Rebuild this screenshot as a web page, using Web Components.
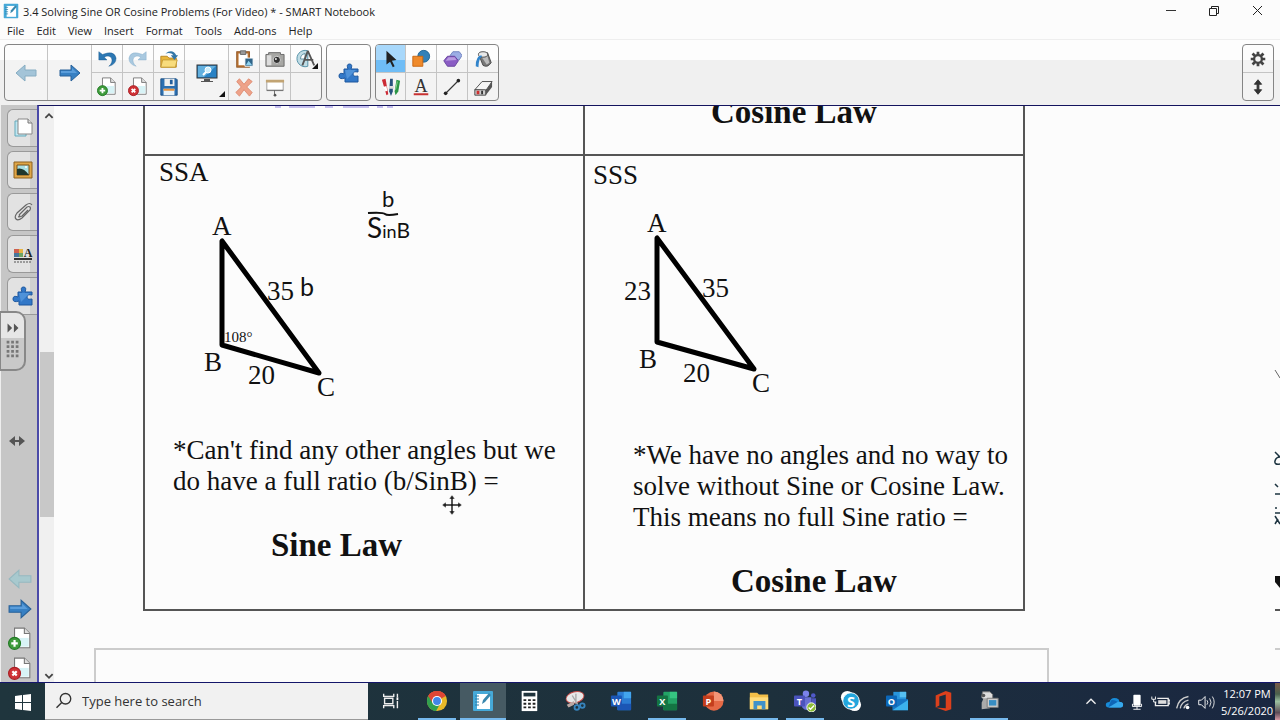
<!DOCTYPE html>
<html lang="en">
<head>
<meta charset="utf-8">
<title>3.4 Solving Sine OR Cosine Problems (For Video) * - SMART Notebook</title>
<style>
html,body{margin:0;height:100%;overflow:hidden;background:#fcfcfc}
</style>
</head>
<body>
<nb-app></nb-app>
<script>
const PAGE='<path d="M6 1h9l5 5v13H6z" fill="#fff" stroke="#777"/><path d="M10 10h9v8h-9z" fill="#d8f3f6"/><path d="M15 1v5h5" fill="#ddd" stroke="#777"/>';
const ARROW='M1 8h11V3l9 8-9 8v-5H1z';
const PUZZLE='<path d="M6 7h4q-2-5 1.500-5T13 7h7v3q-5-1-5 2t5 2v6H7v-4q-6 2-6-2t5-2z" fill="#3278c8" stroke="#1d579e"/><path d="M7 8h11l-9 9z" fill="#5b9ce0" opacity=".7"/>';
const OFF=(c1,c2,c3,letter)=>`<rect x="8" y="2" width="15" height="20" rx="1" fill="${c1}"/><path d="M15 2h8v7h-8z" fill="${c2}"/><path d="M8 15h15v7H8z" fill="${c3}"/><rect x="1" y="6" width="12" height="12" rx="1" fill="${c3}"/><text x="7" y="16" text-anchor="middle" font-size="10" font-weight="bold" fill="#fff" font-family="Open Sans, sans-serif">${letter}</text>`;
const NOTEBOOK='<rect x="1" y="1" width="20" height="20" rx="1" fill="#46a9d8"/><path d="M5 4h13v15H5z" fill="#fff"/><path d="M3 6h4M3 9h4M3 12h4M3 15h4" stroke="#297da8"/><path d="m10 14 1-4 6-7 2 2-6 7z" fill="#3887ad"/>';
const ICONS={
 notebook:[22,NOTEBOOK],
 prev:[22,`<path d="${ARROW}" transform="matrix(-1 0 0 1 22 0)" fill="#a3c4d8" stroke="#87adc2"/>`],
 prevPale:[22,`<path d="${ARROW}" transform="matrix(-1 0 0 1 22 0)" fill="#a8c9ce" stroke="#96b9c0"/>`],
 next:[22,`<path d="${ARROW}" fill="#3780c3" stroke="#286199"/><path d="M2 9h11V6l5 5H2z" fill="#5a9ddb"/>`],
 undo:[22,'<path d="M2 3v9h9l-3-3q5-3 8 1 2 5-3 9 8-2 8-9-2-9-15-4z" fill="#2c78b4" stroke="#1d5a8e" stroke-width=".5"/>'],
 redo:[22,'<path d="M20 3v9h-9l3-3q-5-3-8 1-2 5 3 9-8-2-8-9 2-9 15-4z" fill="#a9c9e0" stroke="#86acc9" stroke-width=".5"/>'],
 add:[22,PAGE+'<circle cx="6" cy="15" r="5.500" fill="#3f9b3c" stroke="#217a24"/><path d="M6 12v6M3 15h6" stroke="#fff" stroke-width="2"/>'],
 del:[22,PAGE+'<circle cx="6" cy="15" r="5.500" fill="#cf3236" stroke="#a91f25"/><path d="m4 13 4 4M8 13l-4 4" stroke="#fff" stroke-width="2"/>'],
 open:[22,'<path d="M2 8h7l2 2h8v10H2z" fill="#e9b73c" stroke="#b68420"/><path d="m2 20 2-8h16l-2 8z" fill="#f8dc7c" stroke="#c59a35"/><path d="M7 5q8-6 12 2h2l-4 5-4-5h3q-3-4-9-2z" fill="#3377a8"/>'],
 save:[22,'<path d="M2 2h17l1 1v17H2z" fill="#2c6fb0" stroke="#1c4e82"/><path d="M6 2h11v8H6z" fill="#eee"/><path d="M12 3h3v5h-3z" fill="#245f9d"/><path d="M5 13h12v7H5z" fill="#e8f3fa"/><path d="M5 13h12v2H5z" fill="#e89440"/>'],
 display:[22,'<rect x="1" y="3" width="20" height="13" fill="#2a82c4" stroke="#333"/><path d="M2 4h18l-12 11H2z" fill="#62b0df"/><circle cx="12" cy="8" r="3" fill="#cfeefb" stroke="#fff"/><path d="m10 10-3 3" stroke="#fff" stroke-width="2"/><path d="M8 17h6v2h3v1H5v-1h3z" fill="#555"/>'],
 paste:[22,'<rect x="3" y="3" width="14" height="17" fill="#b87333" stroke="#8f5422"/><path d="M5 5h10v13H5z" fill="#fff"/><path d="M7 2h6v4H7z" fill="#999" stroke="#666"/><path d="M12 10h9v9h-9z" fill="#2f6488" stroke="#fff"/><path d="m13 18 3-5 4 5z" fill="#8fd2ef"/>'],
 cross:[22,'<path d="m3 5 3-3 5 6 5-6 4 3-6 6 6 6-3 4-6-7-5 7-4-4 6-6z" fill="#eea289" stroke="#dd8b72"/>'],
 camera:[22,'<path d="M1 6h3V4h13v2h4v13H1z" fill="#a7a7a4" stroke="#666"/><path d="M2 7h5v11H2z" fill="#ddd"/><circle cx="13" cy="12" r="4" fill="#333" stroke="#ddd"/><circle cx="12" cy="11" r="1" fill="#fff"/>'],
 screen:[22,'<path d="M2 4h18v11H2z" fill="#fff" stroke="#999"/><path d="M1 3h20v3H1z" fill="#c2a473"/><path d="M2 14h18v1H2zM10 15h1v5h-1z" fill="#666"/><circle cx="11" cy="20" r="1.500" fill="#555"/>'],
 measure:[22,'<path d="M13 2A9 9 0 1 0 13 19z" fill="#bfdce5" stroke="#4c8ba2"/><path d="M10 5a6 6 0 0 0-5 6h5z" fill="#fff" stroke="#588da0"/><path d="m13 2-6 16M13 2l7 16M9 12h10" fill="none" stroke="#555" stroke-width="2"/>'],
 puzzle:[22,PUZZLE],
 pointer:[22,'<path d="M6 2v15l4-3 3 6 2-1-3-6 5-1z" fill="#222"/>'],
 shapes:[22,'<circle cx="14" cy="8" r="6.500" fill="#3481b8" stroke="#1f6394"/><path d="M2 8h11v11H2z" fill="#ef8a2b" stroke="#c86410"/>'],
 polygons:[22,'<path d="m9 7 3-4h7l3 4-3 5h-7z" fill="#9caee5" stroke="#6c80bd"/><path d="m2 13 4-5h8l4 5-4 6H6z" fill="#8a5cc4" stroke="#64409b"/><path d="m4 13 3-4h7l2 3z" fill="#b99be0"/>'],
 bucket:[22,'<path d="m7 8 9-4 4 11q-4 6-9 3z" fill="#777" stroke="#444"/><path d="m9 8 6-3 3 10-3 2z" fill="#bbb"/><ellipse cx="11" cy="6" rx="5" ry="3" fill="#e8e8e8" stroke="#444"/><path d="M9 7q-6 1-6 12l3 1q0-9 4-12z" fill="#3184cb"/>'],
 pens:[22,'<path d="m1 3 4-1 3 17-2 1z" fill="#cc2a35"/><path d="m2 11 4-1 1 5-2 1z" fill="#fff"/><path d="M10 2h3v14l-2 5-2-5z" fill="#26537d"/><path d="M9 10h5v3H9z" fill="#ddd"/><path d="m17 3 4 1-2 12-3 4-1-4z" fill="#2b9545"/><path d="m18 5-2 9" stroke="#8fdc98"/>'],
 text:[22,'<text x="11" y="16" text-anchor="middle" font-family="Liberation Serif, serif" font-size="20" fill="#333">A</text><path d="M3 18h16v2H3z" fill="#c83232"/>'],
 line:[22,'<path d="M4 18 18 4" stroke="#333" stroke-width="1.500"/><circle cx="4" cy="18" r="2" fill="#222"/><circle cx="18" cy="4" r="2" fill="#222"/>'],
 eraser:[22,'<path d="M2 14 10 5h11l-7 10z" fill="#f6f6f6" stroke="#444"/><path d="M2 14h12v6H2z" fill="#ccc" stroke="#444"/><path d="m14 15 7-10v6l-7 9z" fill="#555"/><path d="M4 15h3v4H4z" fill="#cf3030"/><path d="M9 15h2v4H9z" fill="#333"/>'],
 gear:[22,'<g stroke="#444" stroke-width="3"><path d="M11 3v16M3 11h16M5 5l12 12M17 5 5 17"/></g><circle cx="11" cy="11" r="5.500" fill="#444"/><circle cx="11" cy="11" r="3" fill="#f4f4f4"/>'],
 updown:[22,'<path d="m11 3 4 5h-3v6h3l-4 5-4-5h3V8H7z" fill="#333" stroke="#333"/>'],
 leftright:[22,'<path d="m3 11 6-5v4h4V6l6 5-6 5v-4H9v4z" fill="#555"/>'],
 pages:[22,'<path d="M3 4h11v15H3z" fill="#bfe6f1" stroke="#65aabb"/><path d="M6 2h10l4 4v11H6z" fill="#fff" stroke="#888"/><path d="M16 2v4h4" fill="#ddd" stroke="#777"/>'],
 picture:[22,'<path d="M2 3h18v16H2z" fill="#dfa647" stroke="#8d6120"/><path d="M5 6h12v10H5z" fill="#a9dfe3" stroke="#7a501a"/><path d="M5 10q6-2 12 6H5z" fill="#20372d"/><circle cx="14" cy="8" r="1" fill="#fff"/>'],
 clip:[22,'<path d="m7 14 8-8q2-1 3 0t0 3l-8 8q-4 3-6 1t1-6l9-8q4-3 6 0M8 14q-2 2-1 2t3-1l6-6" fill="none" stroke="#666" stroke-width="1.200"/>'],
 props:[22,'<path d="M2 6h5v4H2z" fill="#ce604f"/><path d="M7 6h4v4H7z" fill="#e7b443"/><path d="M2 10h5v4H2z" fill="#47769b"/><path d="M7 10h4v4H7z" fill="#6fa565"/><text x="16" y="14" text-anchor="middle" font-family="Liberation Serif, serif" font-size="12" font-weight="bold" fill="#222">A</text><path d="M2 16h18" stroke="#333" stroke-width="2"/><path d="M2 19h18" stroke="#555" stroke-dasharray="2 1"/>'],
 up:[22,'<path d="m7 13 4-4 4 4" fill="none" stroke="#444" stroke-width="2"/>'],
 down:[22,'<path d="m7 9 4 4 4-4" fill="none" stroke="#444" stroke-width="2"/>'],
 min:[22,'<path d="M6 10.500h10" stroke="#333"/>'],
 restore:[22,'<path d="M6.500 8.500h7v7h-7zM8.500 8V6.500h7v7H14" fill="none" stroke="#222"/>'],
 close:[22,'<path d="m7 6 9 9M16 6l-9 9" stroke="#222"/>'],
 windows:[24,'<path d="m4 6 7-1v7H4zM12 5l8-1v8h-8zM4 13h7v7l-7-1zM12 13h8v8l-8-1z" fill="#fff"/>'],
 search:[24,'<circle cx="14" cy="9" r="7" fill="none" stroke="#333" stroke-width="1.800"/><path d="m9 14-7 7" stroke="#333" stroke-width="1.800"/>'],
 taskview:[24,'<path d="M4 4v3h11V4M5 9h9v6H5zM4 20v-3h11v3" fill="none" stroke="#eee" stroke-width="1.500"/><path d="M19 4v4m0 4v8" stroke="#eee" stroke-width="1.500"/><path d="M18 8h2v3h-2z" fill="#fff"/>'],
 chrome:[24,'<circle cx="12" cy="12" r="11" fill="#e8b928"/><path d="M12 12 2.500 6.500a11 11 0 0 1 19 0z" fill="#df4635"/><path d="M12 12 2.500 6.500A11 11 0 0 0 11 23l5-9z" fill="#31a04f"/><path d="M12 6h9.300a11 11 0 0 0-18.800.500L7 14z" fill="#df4635"/><circle cx="12" cy="12" r="5.500" fill="#fff"/><circle cx="12" cy="12" r="4.300" fill="#4286e8"/>'],
 calc:[24,'<path d="M4 1h17v22H4z" fill="#fff"/><path d="M6 3h13v4H6z" fill="#20343d"/><g fill="#222"><path d="M6 10h3v2H6zM11 10h3v2h-3zM16 10h3v2h-3zM6 14h3v2H6zM11 14h3v2h-3zM16 14h3v2h-3zM6 18h3v2H6zM11 18h3v2h-3zM16 18h3v2h-3z"/></g>'],
 snip:[24,'<ellipse cx="12" cy="8" rx="10" ry="6" fill="#e8e8e8" stroke="#c84a46" transform="rotate(-15 12 8)"/><path d="m9 6 6 10M13 4v11" stroke="#aaa" stroke-width="1.500"/><path d="m3 16 8-4v4l-6 3z" fill="#bba8a4"/><circle cx="14" cy="19" r="2.500" fill="none" stroke="#3784bd" stroke-width="2"/><circle cx="20" cy="17" r="2.500" fill="none" stroke="#3784bd" stroke-width="2"/>'],
 word:[24,OFF('#2b7cd3','#42a5ee','#1b56b5','W')],
 excel:[24,OFF('#23a366','#36c481','#147443','X')],
 ppt:[24,'<circle cx="13" cy="12" r="10.500" fill="#e56945"/><path d="M13 1.500A10.500 10.500 0 0 1 23.500 12H13z" fill="#f49576"/><rect x="1" y="6" width="12" height="12" rx="1" fill="#c43e1c"/><text x="7" y="16" text-anchor="middle" font-size="10" font-weight="bold" fill="#fff" font-family="Open Sans, sans-serif">P</text>'],
 folder:[24,'<path d="M2 3h8l2 2h10v16H2z" fill="#f3bf48"/><path d="M2 8h20v13H2z" fill="#ffdc7b"/><path d="M6 12h13v9h-4v-4h-5v4H6z" fill="#3f91c9"/>'],
 teams:[24,'<circle cx="13" cy="4" r="3.500" fill="#7b83eb"/><circle cx="21" cy="6" r="2.500" fill="#5059c9"/><path d="M7 8h12v12q-6 4-10-1z" fill="#6870d4"/><path d="M19 9h5v8l-5 2z" fill="#4d55bd"/><rect x="0" y="6" width="12" height="12" rx="1" fill="#4b53bc"/><text x="6" y="16" text-anchor="middle" font-size="10" font-weight="bold" fill="#fff" font-family="Open Sans, sans-serif">T</text><circle cx="19" cy="19" r="5" fill="#8cbd35" stroke="#fff"/><path d="m16 19 2 2 4-4" fill="none" stroke="#fff" stroke-width="1.500"/>'],
 skype:[24,'<circle cx="8" cy="8" r="7" fill="#fff"/><circle cx="16" cy="16" r="7" fill="#fff"/><circle cx="12" cy="12" r="9" fill="#23a6dd" stroke="#fff"/><text x="12" y="18" text-anchor="middle" font-size="16" font-weight="bold" fill="#fff" font-family="Open Sans, sans-serif">S</text>'],
 outlook:[24,'<path d="M8 2h14v12H8z" fill="#2895dc"/><path d="M15 2h7v6h-7z" fill="#55c0f2"/><path d="M7 10h17v12H7z" fill="#1675c4"/><path d="m7 22 17-11v11z" fill="#3bb2ee"/><rect x="0" y="6" width="12" height="12" rx="1" fill="#0c67b8"/><text x="6" y="16" text-anchor="middle" font-size="10" font-weight="bold" fill="#fff" font-family="Open Sans, sans-serif">O</text>'],
 office:[24,'<path d="m4 6 11-5 6 2v18l-6 2-11-4 11 1V5L8 7v10l-4 2z" fill="#dc401c"/>'],
 camcorder:[24,'<path d="M5 2h8l3 3v6H7l-3-3z" fill="#ddd" stroke="#777"/><path d="M6 9h7v11l-9 1v-7z" fill="#aaa"/><path d="M10 9h12v10H10z" fill="#ccc" stroke="#777"/><path d="M12 11h8v6h-8z" fill="#378dc3"/><circle cx="6" cy="6" r="2" fill="#555"/>'],
 caret:[22,'<path d="m6 13 5-5 5 5" fill="none" stroke="#eee" stroke-width="1.500"/>'],
 cloud:[22,'<path d="M5 17q-3 0-3-3t4-3q2-6 8-4 3 1 3 4 4 0 4 3t-3 3z" fill="#188bd8"/><path d="M8 9q7-1 9 7H5z" fill="#0e66b7"/><path d="m5 17 8-5q3-2 5-1 3 0 3 3t-3 3z" fill="#37a9ec"/>'],
 mic:[22,'<rect x="7" y="3" width="8" height="12" rx="1" fill="#fff"/><path d="M6 13v3h10v-3M11 16v3M7 19h8" fill="none" stroke="#fff"/>'],
 battery:[22,'<path d="M8 7h12v8H6v-4M20 9h2v4h-2" fill="none" stroke="#eee" stroke-width="1.500"/><path d="M9 9h9v4H9z" fill="#ddd"/><path d="M2 5v3h4V5M4 8v3h3" fill="none" stroke="#fff"/>'],
 wifi:[22,'<g fill="none" stroke="#ccc" stroke-width="1.500"><path d="M4 18Q6 7 17 5M8 18q1-7 9-9M12 18q1-4 5-5"/></g><circle cx="16" cy="17" r="2" fill="#fff"/>'],
 speaker:[22,'<path d="M3 9h3l4-4v13l-4-4H3z" fill="none" stroke="#fff"/><path d="M12 9q2 2 0 5M15 7q3 4 0 9M18 5q4 6 0 13" fill="none" stroke="#eee"/>'],
 ffwd:[22,'<path d="m5 6 5 5-5 5zM12 6l5 5-5 5z" fill="#555"/>'],
 grip:[22,'<g fill="#777"><path d="M4 2h3v3H4zM9 2h3v3H9zM14 2h3v3h-3zM4 7h3v3H4zM9 7h3v3H9zM14 7h3v3h-3zM4 12h3v3H4zM9 12h3v3H9zM14 12h3v3h-3zM4 17h3v3H4zM9 17h3v3H9zM14 17h3v3h-3z"/></g>'],
 move:[22,'<path d="m11 1 3 4h-2v5h5V8l4 3-4 3v-2h-5v5h2l-3 4-3-4h2v-5H5v2l-4-3 4-3v2h5V5H8z" fill="#222" stroke="#fff" stroke-width=".5"/>']
};
const RESET=':host,*{box-sizing:border-box}button{font:inherit;color:inherit;background:none;border:0;padding:0;margin:0}';
function define(name,html,setup){
 const t=document.createElement('template');
 t.innerHTML=html;
 customElements.define(name,class extends HTMLElement{
  constructor(){super();this.attachShadow({mode:'open'}).append(t.content.cloneNode(true));}
  connectedCallback(){if(setup)setup(this,this.shadowRoot);}
 });
}
const ic=(n,s='')=>`<nb-icon name="${n}" ${s?`style="--s:${s}px"`:''}></nb-icon>`;

define('nb-icon','<style>:host{display:block;flex:none;width:var(--s,22px);height:var(--s,22px)}div,svg{display:block;width:100%;height:100%}</style><div></div>',(el,r)=>{
 const [n,body]=ICONS[el.getAttribute('name')];
 r.querySelector('div').innerHTML=`<svg viewBox="0 0 ${n} ${n}" aria-hidden="true">${body}</svg>`;
});

define('title-bar',`<style>${RESET}
:host{display:flex;align-items:center;height:22px;padding-left:3px;font-size:11px;color:#222}
.t{margin-left:4px;white-space:nowrap;flex:1}
button{width:43px;height:22px;display:grid;place-items:center}
.c{margin-right:2px}
</style>${ic('notebook',16)}<span class="t"><slot></slot></span>
<button aria-label="Minimize">${ic('min')}</button><button aria-label="Restore">${ic('restore')}</button><button class="c" aria-label="Close">${ic('close')}</button>`);

define('menu-bar',`<style>${RESET}
:host{display:block;height:18px;border-bottom:1px solid #eee;color:#222;font-size:11px}
nav{display:flex;gap:12px;padding-left:7px;line-height:17px}
</style><nav>${['File','Edit','View','Insert','Format','Tools','Add-ons','Help'].map(x=>`<button>${x}</button>`).join('')}</nav>`);

define('tool-button',`<style>${RESET}
:host{display:block;border-right:1px solid #c4c4c4;border-bottom:1px solid #c4c4c4}
:host([tall]){grid-row:span 2;border-bottom:0}
:host([low]){border-bottom:0}
:host([end]){border-right:0}
:host([active]){background:linear-gradient(#a8d8fb 55%,#6fbdf6 55%)}
button{width:100%;height:100%;display:grid;place-items:center;position:relative}
i{position:absolute;right:3px;bottom:3px;border:3px solid;border-color:transparent #111 #111 transparent}
</style><button></button>`,(el,r)=>{
 const b=r.querySelector('button'),n=el.getAttribute('icon');
 b.setAttribute('aria-label',n||'More');
 b.innerHTML=(n?ic(n,el.hasAttribute('tall')?22:20):'')+(el.hasAttribute('menu')?'<i></i>':'');
});
const tb=(n,a='')=>`<tool-button icon="${n}" ${a}></tool-button>`;
define('tool-bar',`<style>${RESET}
:host{display:flex;gap:4px;height:65px;padding:4px 6px 4px 4px;background:linear-gradient(#fdfdfd 20px,#f0f0f0 20px)}
.g{display:grid;grid-auto-flow:column;grid-template-rows:28px 27px;border:1px solid #858585;border-radius:4px;overflow:hidden;background:linear-gradient(#fdfdfd 15px,#f3f3f3 15px)}
.m{grid-template-columns:43px 44px 31px 31px 31px 44px 31px 31px 30px}
.p{grid-template-columns:43px}
.d{grid-template-columns:30px 31px 31px 30px}
.s{grid-template-columns:30px;margin-left:auto}
</style>
<div class="g m">${tb('prev','tall')}${tb('next','tall')}${tb('undo')}${tb('add','low')}${tb('redo')}${tb('del','low')}${tb('open')}${tb('save','low')}${tb('display','tall menu')}${tb('paste')}${tb('cross','low')}${tb('camera')}${tb('screen','low')}${tb('measure','end menu')}<tool-button low end></tool-button></div>
<div class="g p">${tb('puzzle','tall end')}</div>
<div class="g d">${tb('pointer','active')}${tb('pens','low')}${tb('shapes')}${tb('text','low')}${tb('polygons')}${tb('line','low')}${tb('bucket','end')}${tb('eraser','low end')}</div>
<div class="g s">${tb('gear','end')}${tb('updown','low end')}</div>`);

define('side-rail',`<style>${RESET}
:host{display:flex;flex-direction:column;width:37px;background:#c6c6c6;border-left:1px solid #eee;position:relative}
.tabs{display:flex;flex-direction:column;gap:4px;padding:4px 0 0 6px}
.tabs button{height:38px;border:1px solid #999;border-right:0;border-radius:6px 0 0 6px;background:linear-gradient(90deg,#e2e2e2 22px,#d0d0d0 22px);display:flex;align-items:center;padding-left:4px}
.w{margin:auto 0 auto 5px}
.nav{display:flex;flex-direction:column;gap:6px;padding:0 0 1px 7px}
.nav button{height:24px;display:flex;align-items:center}
.h{position:absolute;left:-1px;top:206px;width:26px;height:60px;border:2px solid #888;border-left:1px solid #888;border-radius:0 10px 10px 0;background:linear-gradient(#e6e6e6 25px,#c9c9c9 25px);display:flex;flex-direction:column;align-items:center;padding-top:5px;gap:1px}
</style>
<div class="tabs">${['pages','picture','clip','props','puzzle'].map(n=>`<button aria-label="${n}">${ic(n)}</button>`).join('')}</div>
<button class="w" aria-label="Resize">${ic('leftright',22)}</button>
<div class="nav">${['prevPale','next','add','del'].map(n=>`<button aria-label="${n}">${ic(n,24)}</button>`).join('')}</div>
<button class="h" aria-label="Move toolbar">${ic('ffwd',20)}${ic('grip',20)}</button>`);

define('scroll-bar',`<style>${RESET}
:host{display:flex;flex-direction:column;width:15px;background:#f0f0f0}
button{height:16px;display:grid;place-items:center;overflow:hidden}
.a{flex:230}.b{flex:165;background:#c8c8c8;margin-left:1px}.c{flex:149}
</style><button aria-label="Scroll up">${ic('up',20)}</button><div class="a"></div><div class="b"></div><div class="c"></div><button aria-label="Scroll down">${ic('down',20)}</button>`);

define('law-cell',`<style>${RESET}
:host{display:flex;flex-direction:column;border-left:2px solid #555;border-top:2px solid #555;padding-top:var(--top,1px);height:455px;min-width:0}
:host([cut]){height:48px;border-top:0;justify-content:flex-end;padding:0 0 23px}
.head{font-size:27px;line-height:31px;padding-left:var(--head,0)}
.note{font-size:27px;line-height:31px;padding-left:var(--note,0);white-space:nowrap}
.law{font-size:33px;line-height:37px;font-weight:bold;padding-left:calc(var(--note,28px) + 98px);white-space:nowrap}
:host(:not([cut])) .law{margin-top:30px}
</style><div class="head"><slot name="head"></slot></div><slot></slot><div class="note"><slot name="note"></slot></div><div class="law"><slot name="law"></slot></div>`);

define('law-sheet',`<style>${RESET}
:host{display:block;flex:1;min-width:0;overflow:hidden;background:#fcfcfc;position:relative;font-family:"Liberation Serif",serif;color:#111}
.col{height:100%;display:flex;flex-direction:column;width:955px;margin-left:40px}
.grid{display:grid;grid-template-columns:1fr 1fr;margin:0 24px 0 49px;border-right:2px solid #555;border-bottom:2px solid #555}
.next{flex:1;margin-top:37px;border:solid #ccc;border-width:2px 2px 0}
svg{display:block;overflow:visible}
.side{position:absolute;right:0;top:0}
.mark{position:absolute;left:221px;top:0}
.cursor{position:absolute;left:387px;top:388px}
h2,p,strong{font:inherit;margin:0}
.pen{font-family:Lato,sans-serif}
.one{--head:14px;--note:28px}
.two{--head:8px;--note:48px;--top:4px}
</style>
<div class="col"><div class="grid">
<law-cell cut></law-cell>
<law-cell cut><strong slot="law">Cosine Law</strong></law-cell>
<law-cell class="one"><h2 slot="head">SSA</h2>
<svg width="438" height="247" viewBox="145 188 438 247" font-size="27" fill="#111">
<path d="M222 241V345L319 373Z" fill="none" stroke="#000" stroke-width="5" stroke-linejoin="round"/>
<text x="212" y="235">A</text><text x="204" y="371">B</text><text x="317" y="396">C</text>
<text x="267" y="300">35</text><text x="248" y="384">20</text><text x="224" y="342" font-size="15">108°</text>
<g class="pen"><text x="300" y="296" font-size="25">b</text><text x="382" y="207" font-size="22">b</text>
<text x="367" y="238"><tspan font-size="28">S</tspan><tspan font-size="18">in</tspan><tspan font-size="21">B</tspan></text></g>
<path d="M368 213q15-1 17 1t13 0" fill="none" stroke="#111" stroke-width="2"/>
</svg>
<p slot="note">*Can't find any other angles but we<br>do have a full ratio (b/SinB) =</p><strong slot="law">Sine Law</strong></law-cell>
<law-cell class="two"><h2 slot="head">SSS</h2>
<svg width="438" height="249" viewBox="585 191 438 249" font-size="27" fill="#111">
<path d="M657 238V342L754 369Z" fill="none" stroke="#000" stroke-width="5" stroke-linejoin="round"/>
<text x="647" y="232">A</text><text x="639" y="368">B</text><text x="752" y="392">C</text>
<text x="702" y="297">35</text><text x="683" y="382">20</text><text x="624" y="300">23</text>
</svg>
<p slot="note">*We have no angles and no way to<br>solve without Sine or Cosine Law.<br>This means no full Sine ratio =</p><strong slot="law">Cosine Law</strong></law-cell>
</div><div class="next"></div></div>
<svg class="mark" width="130" height="2" aria-hidden="true"><path d="M0 1h6M14 1h26M50 1h8M68 1h26M102 1h6M112 1h6" stroke="#8f83e0"/></svg>
<svg class="side" width="5" height="576" aria-hidden="true"><path d="m0 264 5 8" stroke="#666" fill="none"/><path d="m0 346 5 5M5 351q-4 0-5 4t5 3M0 378l3 3M0 388h5M0 402h2M0 407h5M0 410l5 8M0 418l3-5" stroke="#1d3440" stroke-width="1.500" fill="none"/><path d="M0 470h5v12l-5-6z" fill="#111"/><path d="M0 504h5" stroke="#555" stroke-width="2"/><path d="M0 543h5" stroke="#ccc" stroke-width="2"/></svg>
<div class="cursor">${ic('move')}</div>`);

const APPS=[['taskview'],['chrome','run'],['notebook','on'],['calc'],['snip'],['word'],['excel','run'],['ppt'],['folder','run'],['teams','run'],['skype'],['outlook'],['office'],['camcorder','run']];
define('task-bar',`<style>${RESET}
:host{display:flex;height:38px;background:linear-gradient(90deg,#1f353d,#1d303c 60%,#1a2741);color:#fff;border-top:1px solid #14166a}
button{display:grid;place-items:center}
.start{width:45px}
label{flex:0 0 323px;display:flex;align-items:center;gap:9px;padding-left:10px;background:#f1f1f1;border-bottom:1px solid #999;color:#333}
input{flex:1;min-width:0;border:0;padding:0;background:none;font:13px "Open Sans",sans-serif;outline:0}
input::placeholder{color:#333;opacity:1}
.apps{display:flex;flex:1}
.apps button{width:46px;border-bottom:2px solid transparent}
.apps .run{background:linear-gradient(#76b9ed,#76b9ed) 50% 100%/38px 2px no-repeat border-box}
.apps .on{background:#465a63;border-color:#76b9ed}
.tray{display:flex;align-items:center}
.tray button{width:23px}
.clock{text-align:center;font-size:11px;line-height:17px;width:54px;margin:0 1px 0 3px;white-space:nowrap}
.edge{width:5px;background:linear-gradient(#7a5a48,#4a604c 30%,#9cc0a0 50%,#5c4a55 80%,#d79aa5)}
</style>
<button class="start" aria-label="Start">${ic('windows',24)}</button>
<label>${ic('search',18)}<input type="text" placeholder="Type here to search" aria-label="Search"></label>
<div class="apps">${APPS.map(([n,c])=>`<button class="${c||''}" aria-label="${n}">${ic(n,22)}</button>`).join('')}</div>
<div class="tray">${['caret','cloud','mic','battery','wifi','speaker'].map(n=>`<button aria-label="${n}">${ic(n,20)}</button>`).join('')}</div>
<button class="clock"><span>12:07 PM<br>5/26/2020</span></button><div class="edge"></div>`);

define('nb-app',`<style>
:host{display:flex;flex-direction:column;height:100vh;font-family:"Open Sans",sans-serif;background:#fcfcfc}
main{flex:1;min-height:0;display:flex;background:#c6c6c6}
.view{flex:1;min-width:0;display:flex;border-top:1px solid #14145e;border-left:2px solid #4a4aa8}
</style>
<title-bar>3.4 Solving Sine OR Cosine Problems (For Video) * - SMART Notebook</title-bar>
<menu-bar></menu-bar><tool-bar></tool-bar>
<main><side-rail></side-rail><div class="view"><scroll-bar></scroll-bar><law-sheet></law-sheet></div></main>
<task-bar></task-bar>`);
</script>
</body>
</html>
